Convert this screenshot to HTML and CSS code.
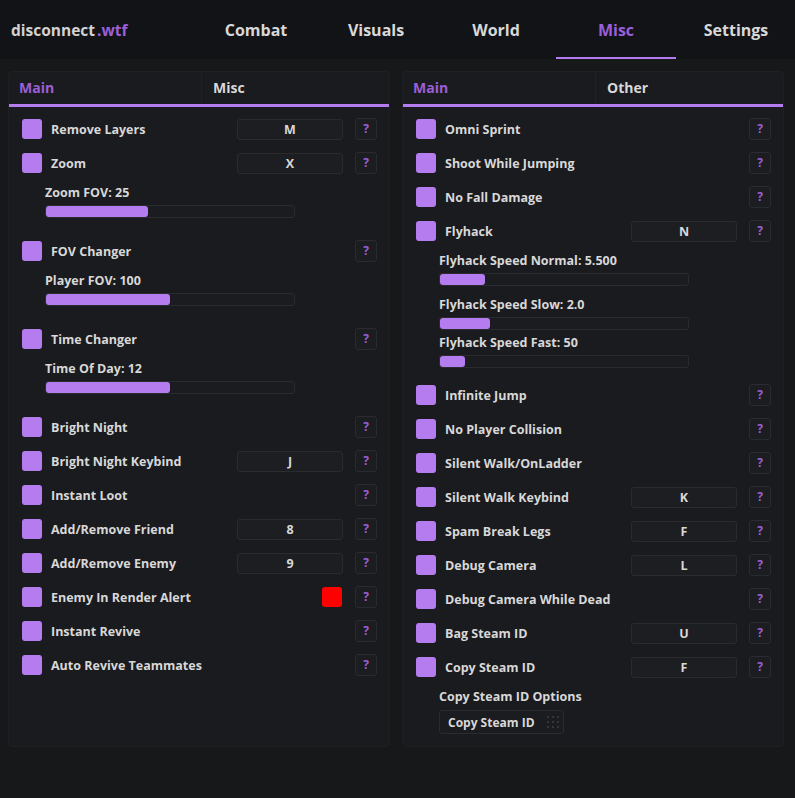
FILE: index.html
```html
<!DOCTYPE html>
<html lang="en">
<head>
    <meta charset="UTF-8">
    <meta name="viewport" content="width=device-width, initial-scale=1.0">
    <title>disconnect.wtf</title>
    <link rel="stylesheet" href="styles.css">
</head>
<body>
    <header class="topbar">
        <div class="logo">disconnect<span class="accent">.wtf</span></div>
        <nav class="tabs">
            <a class="tab">Combat</a>
            <a class="tab">Visuals</a>
            <a class="tab">World</a>
            <a class="tab active">Misc</a>
            <a class="tab">Settings</a>
        </nav>
    </header>

    <main class="content">
        <!-- Left panel -->
        <section class="panel">
            <div class="subtabs">
                <div class="subtab active">Main</div>
                <div class="subtab">Misc</div>
            </div>
            <div class="panel-body">
                <div class="row"><span class="check"></span><span class="label">Remove Layers</span><span class="bind">M</span><span class="help">?</span></div>
                <div class="row"><span class="check"></span><span class="label">Zoom</span><span class="bind">X</span><span class="help">?</span></div>
                <div class="slider">
                    <div class="slider-label">Zoom FOV: 25</div>
                    <div class="track"><div class="fill" style="width: 41%"></div></div>
                </div>
                <div class="row"><span class="check"></span><span class="label">FOV Changer</span><span class="help">?</span></div>
                <div class="slider">
                    <div class="slider-label">Player FOV: 100</div>
                    <div class="track"><div class="fill" style="width: 50%"></div></div>
                </div>
                <div class="row"><span class="check"></span><span class="label">Time Changer</span><span class="help">?</span></div>
                <div class="slider">
                    <div class="slider-label">Time Of Day: 12</div>
                    <div class="track"><div class="fill" style="width: 50%"></div></div>
                </div>
                <div class="row"><span class="check"></span><span class="label">Bright Night</span><span class="help">?</span></div>
                <div class="row"><span class="check"></span><span class="label">Bright Night Keybind</span><span class="bind">J</span><span class="help">?</span></div>
                <div class="row"><span class="check"></span><span class="label">Instant Loot</span><span class="help">?</span></div>
                <div class="row"><span class="check"></span><span class="label">Add/Remove Friend</span><span class="bind">8</span><span class="help">?</span></div>
                <div class="row"><span class="check"></span><span class="label">Add/Remove Enemy</span><span class="bind">9</span><span class="help">?</span></div>
                <div class="row"><span class="check"></span><span class="label">Enemy In Render Alert</span><span class="swatch"></span><span class="help">?</span></div>
                <div class="row"><span class="check"></span><span class="label">Instant Revive</span><span class="help">?</span></div>
                <div class="row"><span class="check"></span><span class="label">Auto Revive Teammates</span><span class="help">?</span></div>
            </div>
        </section>

        <!-- Right panel -->
        <section class="panel">
            <div class="subtabs">
                <div class="subtab active">Main</div>
                <div class="subtab">Other</div>
            </div>
            <div class="panel-body">
                <div class="row"><span class="check"></span><span class="label">Omni Sprint</span><span class="help">?</span></div>
                <div class="row"><span class="check"></span><span class="label">Shoot While Jumping</span><span class="help">?</span></div>
                <div class="row"><span class="check"></span><span class="label">No Fall Damage</span><span class="help">?</span></div>
                <div class="row"><span class="check"></span><span class="label">Flyhack</span><span class="bind">N</span><span class="help">?</span></div>
                <div class="slider gap-s">
                    <div class="slider-label">Flyhack Speed Normal: 5.500</div>
                    <div class="track"><div class="fill" style="width: 18%"></div></div>
                </div>
                <div class="slider gap-none">
                    <div class="slider-label">Flyhack Speed Slow: 2.0</div>
                    <div class="track"><div class="fill" style="width: 20%"></div></div>
                </div>
                <div class="slider gap-m">
                    <div class="slider-label">Flyhack Speed Fast: 50</div>
                    <div class="track"><div class="fill" style="width: 10%"></div></div>
                </div>
                <div class="row"><span class="check"></span><span class="label">Infinite Jump</span><span class="help">?</span></div>
                <div class="row"><span class="check"></span><span class="label">No Player Collision</span><span class="help">?</span></div>
                <div class="row"><span class="check"></span><span class="label">Silent Walk/OnLadder</span><span class="help">?</span></div>
                <div class="row"><span class="check"></span><span class="label">Silent Walk Keybind</span><span class="bind">K</span><span class="help">?</span></div>
                <div class="row"><span class="check"></span><span class="label">Spam Break Legs</span><span class="bind">F</span><span class="help">?</span></div>
                <div class="row"><span class="check"></span><span class="label">Debug Camera</span><span class="bind">L</span><span class="help">?</span></div>
                <div class="row"><span class="check"></span><span class="label">Debug Camera While Dead</span><span class="help">?</span></div>
                <div class="row"><span class="check"></span><span class="label">Bag Steam ID</span><span class="bind">U</span><span class="help">?</span></div>
                <div class="row"><span class="check"></span><span class="label">Copy Steam ID</span><span class="bind">F</span><span class="help">?</span></div>
                <div class="options">
                    <div class="slider-label">Copy Steam ID Options</div>
                    <div class="dropdown">
                        <span>Copy Steam ID</span>
                        <svg class="grip" width="12" height="12" viewBox="0 0 12 12">
                            <rect x="0" y="0" width="2" height="2"/><rect x="5" y="0" width="2" height="2"/><rect x="10" y="0" width="2" height="2"/>
                            <rect x="0" y="5" width="2" height="2"/><rect x="5" y="5" width="2" height="2"/><rect x="10" y="5" width="2" height="2"/>
                            <rect x="0" y="10" width="2" height="2"/><rect x="5" y="10" width="2" height="2"/><rect x="10" y="10" width="2" height="2"/>
                        </svg>
                    </div>
                </div>
            </div>
        </section>
    </main>
</body>
</html>
```

FILE: styles.css
```css
body {
    font-family: "Open Sans", "Noto Sans", sans-serif;
    font-weight: 700;
    background-color: #17181a;
    color: #d8d8d8;
    margin: 0;
}

.topbar {
    display: flex;
    justify-content: space-between;
    align-items: stretch;
    height: 59px;
    background-color: #121316;
}
.logo {
    padding-left: 11px;
    font-size: 15.5px;
    line-height: 60px;
    color: #d2d2d2;
}
.accent {
    margin-left: 2px;
    color: #9b5fd8;
}
.tabs {
    display: flex;
    margin-right: -1px;
}
.tab {
    width: 120px;
    text-align: center;
    font-size: 16px;
    line-height: 61px;
    color: #d8d8d8;
    box-sizing: border-box;
}
.tab.active {
    color: #9b5fd8;
    border-bottom: 2px solid #b57cf0;
}

.content {
    display: grid;
    grid-template-columns: 382px 382px;
    gap: 12px;
    padding: 12px 0 0 8px;
}
.panel {
    background-color: #1a1b1e;
    border: 1px solid #1f2023;
    border-radius: 4px;
}
.subtabs {
    display: grid;
    grid-template-columns: 193px 1fr;
    border-bottom: 3px solid #b57cf0;
}
.subtab {
    height: 32px;
    line-height: 32px;
    padding-left: 11px;
    font-size: 14px;
    color: #d8d8d8;
}
.subtab:first-child {
    padding-left: 10px;
    border-right: 1px solid #202124;
}
.subtab.active {
    color: #9b5fd8;
}

.panel-body {
    padding: 5px 12px 12px 13px;
}
.row {
    display: flex;
    align-items: center;
    height: 34px;
}
.check {
    width: 20px;
    height: 20px;
    border-radius: 3px;
    background-color: #b57cf0;
}
.label {
    flex: 1;
    margin-left: 9px;
    font-size: 12.5px;
}
.bind {
    width: 104px;
    height: 19px;
    line-height: 19px;
    margin-right: 12px;
    text-align: center;
    font-size: 12.5px;
    background-color: #1d1e21;
    border: 1px solid #2a2b2f;
    border-radius: 3px;
}
.swatch {
    width: 20px;
    height: 20px;
    margin-right: 13px;
    border-radius: 3px;
    background-color: #ff0000;
}
.help {
    width: 20px;
    height: 20px;
    line-height: 20px;
    text-align: center;
    font-size: 12px;
    color: #9b5fd8;
    background-color: #1c1d20;
    border: 1px solid #2a2b2f;
    border-radius: 3px;
}

.slider {
    padding: 5px 0 0 23px;
    margin-bottom: 16px;
}
.slider.gap-m {
    margin-bottom: 10px;
}
.slider.gap-s {
    margin-bottom: 6px;
}
.slider.gap-none {
    margin-bottom: 0;
}
.slider-label {
    font-size: 12.5px;
    line-height: 16px;
}
.track {
    width: 248px;
    height: 11px;
    margin-top: 4px;
    background-color: #1b1c1f;
    border: 1px solid #2a2b2f;
    border-radius: 3px;
}
.fill {
    height: 100%;
    background-color: #b57cf0;
    border-radius: 3px;
}

.options {
    padding: 5px 0 0 23px;
}
.dropdown {
    display: flex;
    align-items: center;
    justify-content: space-between;
    width: 111px;
    height: 22px;
    margin-top: 5px;
    padding: 0 4px 0 8px;
    font-size: 12px;
    background-color: #1b1c1f;
    border: 1px solid #2a2b2f;
    border-radius: 3px;
}
.grip {
    fill: #34353a;
}
```
